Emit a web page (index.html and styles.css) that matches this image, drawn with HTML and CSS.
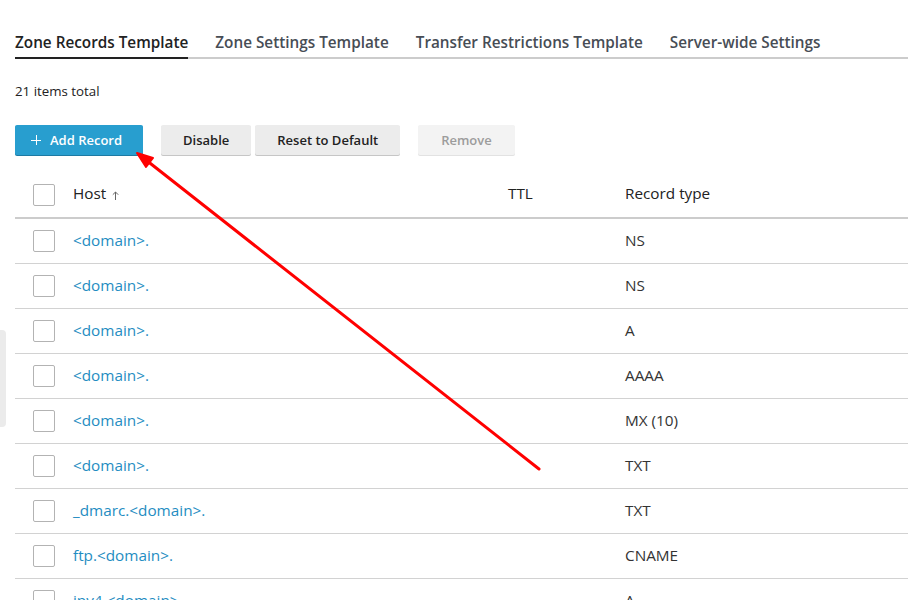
FILE: index.html
```html
<!DOCTYPE html>
<html>
<head>
<meta charset="utf-8">
<link rel="stylesheet" href="styles.css">
</head>
<body>
<div class="page">
  <nav class="tabs">
    <a class="tab active">Zone Records Template</a>
    <a class="tab">Zone Settings Template</a>
    <a class="tab">Transfer Restrictions Template</a>
    <a class="tab">Server-wide Settings</a>
  </nav>
  <div class="total">21 items total</div>
  <div class="toolbar">
    <button class="btn primary"><span class="plus"></span>Add Record</button>
    <div class="group">
      <button class="btn">Disable</button>
      <button class="btn">Reset to Default</button>
    </div>
    <button class="btn disabled">Remove</button>
  </div>
  <div class="table">
    <div class="row head">
      <div class="cell"><span class="cb"></span></div>
      <div class="cell">Host <svg class="sort" width="7" height="9" viewBox="0 0 7 9"><path d="M3.5 9V1M0.8 3.7L3.5 1L6.2 3.7" fill="none" stroke="#666" stroke-width="1"/></svg></div>
      <div class="cell">TTL</div>
      <div class="cell">Record type</div>
    </div>
    <div class="row"><div class="cell"><span class="cb"></span></div><div class="cell link">&lt;domain&gt;.</div><div class="cell"></div><div class="cell">NS</div></div>
    <div class="row"><div class="cell"><span class="cb"></span></div><div class="cell link">&lt;domain&gt;.</div><div class="cell"></div><div class="cell">NS</div></div>
    <div class="row"><div class="cell"><span class="cb"></span></div><div class="cell link">&lt;domain&gt;.</div><div class="cell"></div><div class="cell">A</div></div>
    <div class="row"><div class="cell"><span class="cb"></span></div><div class="cell link">&lt;domain&gt;.</div><div class="cell"></div><div class="cell">AAAA</div></div>
    <div class="row"><div class="cell"><span class="cb"></span></div><div class="cell link">&lt;domain&gt;.</div><div class="cell"></div><div class="cell">MX (10)</div></div>
    <div class="row"><div class="cell"><span class="cb"></span></div><div class="cell link">&lt;domain&gt;.</div><div class="cell"></div><div class="cell">TXT</div></div>
    <div class="row"><div class="cell"><span class="cb"></span></div><div class="cell link">_dmarc.&lt;domain&gt;.</div><div class="cell"></div><div class="cell">TXT</div></div>
    <div class="row"><div class="cell"><span class="cb"></span></div><div class="cell link">ftp.&lt;domain&gt;.</div><div class="cell"></div><div class="cell">CNAME</div></div>
    <div class="row"><div class="cell"><span class="cb"></span></div><div class="cell link">ipv4.&lt;domain&gt;.</div><div class="cell"></div><div class="cell">A</div></div>
  </div>
</div>
<div class="side-tab"></div>
<svg class="arrow" width="908" height="600" viewBox="0 0 908 600">
  <line x1="539" y1="469" x2="146" y2="160" stroke="#ff0000" stroke-width="3" stroke-linecap="round"/>
  <polygon points="137,153 153,158 146,167" fill="#ff0000" stroke="#ff0000" stroke-width="2" stroke-linejoin="round"/>
</svg>
</body>
</html>
```

FILE: styles.css
```css
html, body {
  margin: 0;
  padding: 0;
  background: #fff;
  overflow: hidden;
  height: 600px;
}
body {
  font-family: "Open Sans", "Liberation Sans", sans-serif;
  color: #222;
}
.page {
  padding: 31px 0 0 15px;
}
.tabs {
  display: flex;
  gap: 27px;
  border-bottom: 2px solid #cccccc;
}
.tab {
  font-size: 15.3px;
  font-weight: 600;
  line-height: 22px;
  padding-bottom: 4px;
  color: #474d55;
  margin-bottom: -2px;
  border-bottom: 2px solid transparent;
}
.tab.active {
  color: #222;
  border-bottom-color: #222;
}
.total {
  margin-top: 23px;
  font-size: 13.3px;
  line-height: 18px;
  color: #222;
}
.toolbar {
  margin-top: 25px;
  display: flex;
  gap: 18px;
}
.group {
  display: flex;
  gap: 4px;
}
.btn {
  font-family: inherit;
  font-size: 13px;
  font-weight: 600;
  height: 30px;
  padding: 0 22px;
  border: none;
  border-radius: 2px;
  background: #ececec;
  color: #222;
  box-shadow: 0 1px 0 #c6c6c6;
  display: flex;
  align-items: center;
}
.btn.primary {
  background: #289ecf;
  color: #fff;
  padding-left: 16px;
  padding-right: 21px;
  box-shadow: 0 1px 0 #1d7aa3;
}
.btn.disabled {
  background: #f3f3f3;
  color: #9c9c9c;
  box-shadow: 0 1px 0 #e2e2e2;
  padding: 0 23px;
}
.plus {
  position: relative;
  width: 10px;
  height: 10px;
  margin-right: 9px;
}
.plus::before, .plus::after {
  content: "";
  position: absolute;
  background: #fff;
}
.plus::before { left: 0; top: 4.5px; width: 10px; height: 1px; }
.plus::after { left: 4.5px; top: 0; width: 1px; height: 10px; }
.table {
  margin-top: 17px;
}
.row {
  display: grid;
  grid-template-columns: 58px 435px 117px 1fr;
  align-items: center;
  height: 44px;
  border-bottom: 1px solid #d2d2d2;
  font-size: 15.3px;
  color: #333;
}
.row .cell {
  padding-bottom: 2px;
}
.row.head {
  height: 45px;
  border-bottom: 2px solid #cccccc;
  color: #222;
}
.row.head .cell {
  padding-bottom: 3px;
}
.row .cell:first-child {
  padding-bottom: 0;
}
.cell {
  white-space: nowrap;
}
.cb {
  display: block;
  box-sizing: border-box;
  width: 22px;
  height: 22px;
  margin-left: 18px;
  border: 1px solid #b3b3b3;
  border-radius: 2px;
  background: #fff;
}
.sort {
  margin-left: 2px;
  vertical-align: -1px;
}
.link {
  color: #1f8dc2;
}
.side-tab {
  position: absolute;
  left: 0;
  top: 330px;
  width: 6px;
  height: 97px;
  background: #ebebeb;
  border-radius: 0 4px 4px 0;
}
.arrow {
  position: absolute;
  left: 0;
  top: 0;
  pointer-events: none;
}
```
